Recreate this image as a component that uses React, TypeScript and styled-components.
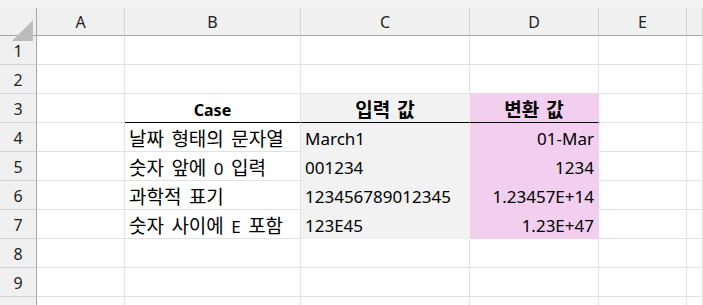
import React from 'react';
import styled, { createGlobalStyle, css } from 'styled-components';

const GlobalStyle = createGlobalStyle`
  body {
    margin: 0;
    background: #ffffff;
    font-family: 'Noto Sans', 'Noto Sans CJK KR', sans-serif;
  }
`;

const Sheet = styled.div`
  width: 703px;
  height: 305px;
  overflow: hidden;
  background: #ffffff;
`;

const TopStrip = styled.div`
  height: 8px;
  background: #f3f3f3;
`;

const Grid = styled.div`
  display: grid;
  grid-template-columns: 37px 88px 176px 169px 129px 88px 1fr;
  grid-auto-rows: 29px;
  grid-template-rows: 28px;
`;

const Corner = styled.div`
  position: relative;
  background: #f0f0f0;
  border-right: 1px solid #a6a6a6;
  border-bottom: 1px solid #a6a6a6;
`;

// 왼쪽 위 전체 선택 삼각형
const Triangle = styled.div`
  position: absolute;
  left: 12px;
  top: 12px;
  width: 21px;
  height: 21px;
  background: #bcbcbc;
  clip-path: polygon(100% 0, 100% 100%, 0 100%);
`;

const ColHead = styled.div`
  display: flex;
  align-items: center;
  justify-content: center;
  padding-top: 1px;
  background: #f0f0f0;
  border-right: 1px solid #d2d2d2;
  border-bottom: 1px solid #a6a6a6;
  font-size: 16px;
  color: #1f1f1f;
`;

const RowHead = styled.div`
  display: flex;
  align-items: center;
  justify-content: center;
  padding-top: 2px;
  background: #f0f0f0;
  border-right: 1px solid #a6a6a6;
  border-bottom: 1px solid #d2d2d2;
  font-size: 16px;
  color: #1f1f1f;
`;

type Fill = 'gray' | 'pink';
const fills: Record<Fill, string> = { gray: '#f2f2f2', pink: '#f2ceef' };

const Cell = styled.div<{ $fill?: Fill; $align?: 'left' | 'center' | 'right'; $bold?: boolean; $rule?: boolean }>`
  display: flex;
  align-items: center;
  justify-content: ${(p) => (p.$align === 'right' ? 'flex-end' : p.$align === 'center' ? 'center' : 'flex-start')};
  padding: 3px 4px 0 4px;
  white-space: pre;
  line-height: 20px;
  word-spacing: 3px;
  font-size: ${(p) => (p.$bold ? 16 : 17)}px;
  color: #000;
  font-weight: ${(p) => (p.$bold ? 700 : 400)};
  background: ${(p) => (p.$fill ? fills[p.$fill] : '#ffffff')};
  border-right: 1px solid ${(p) => (p.$fill ? fills[p.$fill] : '#e1e1e1')};
  border-bottom: 1px solid ${(p) => (p.$fill ? fills[p.$fill] : '#e1e1e1')};
  ${(p) =>
    p.$rule &&
    css`
      border-bottom-color: #000;
    `}
`;

// 한글 글자는 CJK 글꼴로, 맑은 고딕 폭에 맞춰 조금 크게
const Hangul = styled.span`
  font-family: 'Noto Sans CJK KR', sans-serif;
  font-size: 19px;
  line-height: 1;
`;

function Text({ value }: { value: string }) {
  const parts = value.split(/([\uAC00-\uD7A3]+)/);
  return (
    <span>
      {parts.map((part, i) =>
        /[\uAC00-\uD7A3]/.test(part) ? <Hangul key={i}>{part}</Hangul> : <React.Fragment key={i}>{part}</React.Fragment>
      )}
    </span>
  );
}

const columns = ['A', 'B', 'C', 'D', 'E', ''];

const table: Record<number, [string, string, string]> = {
  4: ['날짜 형태의 문자열', 'March1', '01-Mar'],
  5: ['숫자 앞에 0 입력', '001234', '1234'],
  6: ['과학적 표기', '123456789012345', '1.23457E+14'],
  7: ['숫자 사이에 E 포함', '123E45', '1.23E+47'],
};

function Row({ n }: { n: number }) {
  const label = n < 10 ? n : '';
  if (n === 3) {
    return (
      <>
        <RowHead>{label}</RowHead>
        <Cell />
        <Cell $align="center" $bold $rule>Case</Cell>
        <Cell $align="center" $bold $rule $fill="gray"><Text value="입력 값" /></Cell>
        <Cell $align="center" $bold $rule $fill="pink"><Text value="변환 값" /></Cell>
        <Cell />
        <Cell />
      </>
    );
  }
  const data = table[n];
  return (
    <>
      <RowHead>{label}</RowHead>
      <Cell />
      <Cell>{data && <Text value={data[0]} />}</Cell>
      <Cell $fill={data ? 'gray' : undefined}>{data ? data[1] : ''}</Cell>
      <Cell $fill={data ? 'pink' : undefined} $align="right">{data ? data[2] : ''}</Cell>
      <Cell />
      <Cell />
    </>
  );
}

export default function App() {
  return (
    <Sheet>
      <GlobalStyle />
      <TopStrip />
      <Grid>
        <Corner>
          <Triangle />
        </Corner>
        {columns.map((c, i) => (
          <ColHead key={i}>{c}</ColHead>
        ))}
        {Array.from({ length: 10 }, (_, i) => (
          <Row key={i} n={i + 1} />
        ))}
      </Grid>
    </Sheet>
  );
}
